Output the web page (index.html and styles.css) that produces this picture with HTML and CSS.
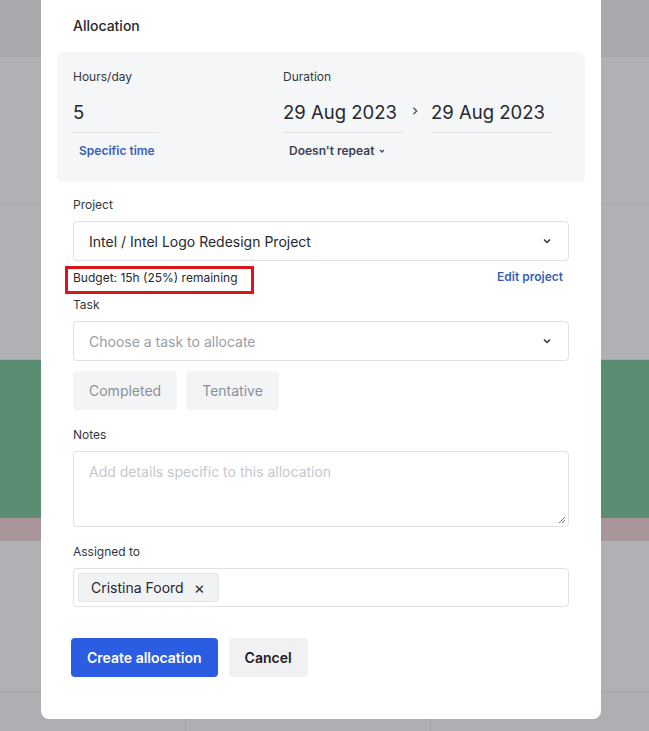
FILE: index.html
```html
<!DOCTYPE html>
<html>
  <head>
    <meta charset="utf-8">
    <meta name="viewport" content="width=device-width, initial-scale=1.0">
    <title>Allocation</title>
    <link rel="stylesheet" href="styles.css">
  </head>
  <body>
    <!-- schedule grid behind the overlay -->
    <div class="backdrop">
      <div class="band band-top"></div>
      <div class="band band-row"></div>
      <div class="band band-row"></div>
      <div class="band band-green"></div>
      <div class="band band-red"></div>
      <div class="band band-row band-last"></div>
      <div class="band band-foot">
        <span></span><span></span><span></span>
      </div>
    </div>

    <div class="modal">
      <h2 class="title">Allocation</h2>

      <div class="panel">
        <div class="col col-hours">
          <div class="label">Hours/day</div>
          <div class="line-input hours">5</div>
          <a class="link link-time">Specific time</a>
        </div>
        <div class="col">
          <div class="label">Duration</div>
          <div class="dates">
            <div class="line-input date">29 Aug 2023</div>
            <svg class="arrow" width="10" height="10" viewBox="0 0 10 10"><path d="M3.5 1.8 L6.7 5 L3.5 8.2" fill="none" stroke="#555" stroke-width="1.4"/></svg>
            <div class="line-input date">29 Aug 2023</div>
          </div>
          <a class="repeat">Doesn't repeat
            <svg width="8" height="8" viewBox="0 0 8 8"><path d="M2 3 L4 5 L6 3" fill="none" stroke="#444a58" stroke-width="1.3"/></svg>
          </a>
        </div>
      </div>

      <div class="field">
        <div class="label">Project</div>
        <div class="select">
          <span>Intel / Intel Logo Redesign Project</span>
          <svg width="12" height="12" viewBox="0 0 12 12"><path d="M3 4.5 L6 7.5 L9 4.5" fill="none" stroke="#333" stroke-width="1.5"/></svg>
        </div>
        <div class="budget-row">
          <span class="budget">Budget: 15h (25%) remaining</span>
          <a class="link">Edit project</a>
        </div>
      </div>

      <div class="field field-task">
        <div class="label">Task</div>
        <div class="select placeholder">
          <span>Choose a task to allocate</span>
          <svg width="12" height="12" viewBox="0 0 12 12"><path d="M3 4.5 L6 7.5 L9 4.5" fill="none" stroke="#333" stroke-width="1.5"/></svg>
        </div>
        <div class="toggles">
          <button class="toggle">Completed</button>
          <button class="toggle">Tentative</button>
        </div>
      </div>

      <div class="field field-notes">
        <div class="label">Notes</div>
        <div class="textarea">
          Add details specific to this allocation
          <svg class="grip" width="9" height="9" viewBox="0 0 9 9"><path d="M8 2 L2 8 M8 5 L5 8" stroke="#777" stroke-width="1"/></svg>
        </div>
      </div>

      <div class="field field-assigned">
        <div class="label">Assigned to</div>
        <div class="people">
          <span class="chip">Cristina Foord <span class="chip-x">&times;</span></span>
        </div>
      </div>

      <div class="actions">
        <button class="btn btn-primary">Create allocation</button>
        <button class="btn btn-cancel">Cancel</button>
      </div>
    </div>
  </body>
</html>
```

FILE: styles.css
```css
html, body {
  width: 100%;
  height: 100%;
  margin: 0;
  padding: 0;
  overflow: hidden;
  font-family: Inter, "Noto Sans", sans-serif;
  color: #2b2d31;
  background-color: #adafb3;
}
.backdrop {
  display: flex;
  flex-direction: column;
  height: 100%;
}
.band {
  border-bottom: 1px solid #a4a6aa;
}
.band-top {
  height: 56px;
  background-color: #a8a9ad;
}
.band-row {
  height: 147px;
  background-color: #afb1b5;
}
.band-row + .band-row {
  height: 154px;
}
.band-green {
  height: 158px;
  background-color: #5a8d72;
  border: 0;
}
.band-red {
  height: 23px;
  background-color: #a9969a;
  border: 0;
}
.band-last {
  height: 150px;
}
.band-foot {
  flex: 1;
  display: flex;
  border: 0;
  background-color: #adafb3;
}
.band-foot span {
  width: 244px;
  flex-shrink: 0;
  border-right: 1px solid #a2a4a8;
}
.band-foot span:first-child {
  width: 185px;
}

.modal {
  position: absolute;
  left: 41px;
  top: -10px;
  width: 560px;
  height: 729px;
  box-sizing: border-box;
  background: #fff;
  border-radius: 8px;
  padding-top: 26px;
}
.title {
  margin: 0 0 16px 32px;
  font-size: 14px;
  line-height: 20px;
  font-weight: 500;
  color: #26282c;
}
.label {
  font-size: 12px;
  line-height: 16px;
  color: #34373d;
}
a {
  cursor: pointer;
}
.link {
  font-size: 12px;
  line-height: 16px;
  font-weight: 600;
  color: #3b5fae;
}

.panel {
  margin: 0 16px;
  height: 130px;
  box-sizing: border-box;
  padding: 17px 16px 0;
  background: #f5f6f8;
  border-radius: 6px;
  display: flex;
  gap: 125px;
}
.col {
  display: flex;
  flex-direction: column;
  align-items: flex-start;
}
.col-hours {
  width: 85px;
}
.line-input {
  margin-top: 7px;
  height: 40px;
  line-height: 40px;
  font-size: 18.5px;
  white-space: nowrap;
  border-bottom: 1px solid #dfe1e5;
  color: #26282c;
}
.hours {
  width: 85px;
}
.link-time {
  margin: 10px 0 0 6px;
}
.dates {
  display: flex;
  align-items: flex-end;
}
.date {
  width: 120px;
}
.arrow {
  margin: 0 11px 17px 7px;
}
.repeat {
  margin: 10px 0 0 6px;
  font-size: 12px;
  line-height: 16px;
  font-weight: 600;
  color: #3e4350;
  display: flex;
  align-items: center;
  gap: 4px;
}

.field {
  margin: 15px 32px 0;
}
.field-task {
  margin-top: 12px;
}
.field-notes {
  margin-top: 17px;
}
.field-assigned {
  margin-top: 17px;
}
.select {
  margin-top: 8px;
  height: 40px;
  box-sizing: border-box;
  border: 1px solid #dfe1e5;
  border-radius: 4px;
  padding: 0 15px;
  display: flex;
  align-items: center;
  justify-content: space-between;
  font-size: 14px;
  color: #26282c;
}
.placeholder {
  color: #9a9ea6;
}
.budget-row {
  margin-top: 8px;
  height: 16px;
  display: flex;
  justify-content: space-between;
  align-items: center;
  padding-right: 6px;
}
.budget {
  position: relative;
  font-size: 12px;
  color: #26282c;
}
.budget::after {
  content: "";
  position: absolute;
  left: -8px;
  top: -4px;
  width: 183px;
  height: 22px;
  border: 3px solid #d7151b;
}
.toggles {
  margin-top: 10px;
  display: flex;
  gap: 9px;
}
button {
  font-family: inherit;
  border: 0;
  cursor: pointer;
}
.toggle {
  height: 39px;
  padding: 0 16px;
  border-radius: 4px;
  background: #f3f4f6;
  color: #8c9099;
  font-size: 14px;
}
.textarea {
  position: relative;
  margin-top: 8px;
  height: 76px;
  box-sizing: border-box;
  border: 1px solid #dfe1e5;
  border-radius: 4px;
  padding: 11px 15px;
  font-size: 14px;
  line-height: 18px;
  color: #c6c8cd;
}
.grip {
  position: absolute;
  right: 2px;
  bottom: 2px;
}
.people {
  margin-top: 8px;
  height: 39px;
  box-sizing: border-box;
  border: 1px solid #dfe1e5;
  border-radius: 4px;
  padding: 4px;
  display: flex;
}
.chip {
  display: flex;
  align-items: center;
  gap: 10px;
  padding: 0 13px 0 12px;
  background: #f1f2f4;
  border: 1px solid #e4e5e8;
  border-radius: 3px;
  font-size: 14px;
  color: #26282c;
}
.chip-x {
  font-size: 17px;
  color: #333;
}
.actions {
  margin: 31px 30px 0;
  display: flex;
  gap: 11px;
}
.btn {
  height: 39px;
  border-radius: 4px;
  font-size: 14px;
  font-weight: 600;
  padding: 0 16px;
}
.btn-primary {
  background: #2a5de2;
  color: #fff;
}
.btn-cancel {
  background: #f1f1f3;
  color: #1f2024;
}
```
